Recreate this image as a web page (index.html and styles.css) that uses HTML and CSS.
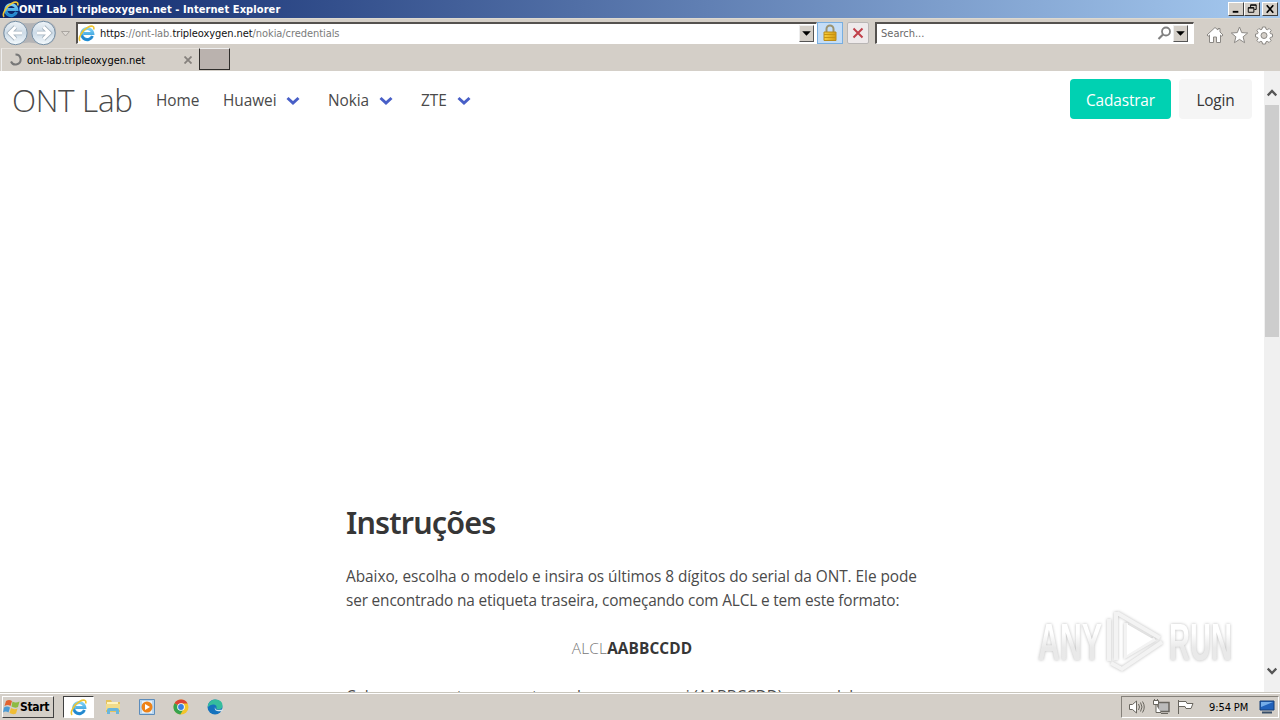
FILE: index.html
```html
<!DOCTYPE html>
<html lang="pt">
<head>
<meta charset="utf-8">
<title>ONT Lab | tripleoxygen.net</title>
<link rel="stylesheet" href="styles.css">
</head>
<body>
<svg width="0" height="0" class="defs">
  <defs>
    <linearGradient id="blue" x1="0" y1="0" x2="0" y2="1"><stop offset="0" stop-color="#7ed0f5"/><stop offset="1" stop-color="#1f8fd6"/></linearGradient>
    <linearGradient id="gold" x1="0" y1="0" x2="1" y2="0"><stop offset="0" stop-color="#f8cf3e"/><stop offset="1" stop-color="#d49a10"/></linearGradient>
    <linearGradient id="orb" x1="0" y1="0" x2="0" y2="1"><stop offset="0" stop-color="#eef3f7"/><stop offset=".5" stop-color="#cddbe7"/><stop offset="1" stop-color="#f4fafd"/></linearGradient>
    <linearGradient id="wmfill" x1="0" y1="0" x2="0" y2="1"><stop offset=".35" stop-color="#fff"/><stop offset=".6" stop-color="#e9e9e9"/></linearGradient>
    <symbol id="ie" viewBox="0 0 16 16">
      <path d="M13.6 10.4a5.2 5.2 0 1 1 .3-2.4H5.2" fill="none" stroke="url(#blue)" stroke-width="2.9"/>
      <path d="M13.6 10.4a5.2 5.2 0 0 1-9.8-.5" fill="none" stroke="#2584cb" stroke-width="1.4"/>
      <path d="M2 15C-.5 12.500 4 5 9 2.300c4-2.200 6.800-1.500 5.700 2" fill="none" stroke="#efc532" stroke-width="1.500"/>
    </symbol>
    <symbol id="chev" viewBox="0 0 14 10"><path d="M1.500 2l5.500 5 5.500-5" fill="none" stroke="#485fc7" stroke-width="3"/></symbol>
  </defs>
</svg>
<div class="screen">
  <header class="titlebar">
    <svg class="title-icon" width="17" height="17"><use href="#ie"/></svg>
    <span class="title-text">ONT Lab | tripleoxygen.net - Internet Explorer</span>
    <div class="winbtns">
      <svg class="winbtn" width="15" height="12" viewBox="0 0 15 12"><path d="M4 9h6" stroke="#000" stroke-width="2"/></svg>
      <svg class="winbtn" width="15" height="12" viewBox="0 0 15 12"><path d="M6 4.500V1.500h6v5h-2M3.500 4.500h6v5h-6zM6 2h6M3.500 5h6" fill="none" stroke="#000"/></svg>
      <svg class="winbtn close" width="15" height="12" viewBox="0 0 15 12"><path d="M4 2l7 8M11 2l-7 8" stroke="#000" stroke-width="1.800"/></svg>
    </div>
  </header>
  <div class="navrow">
    <svg class="backfwd" width="76" height="30" viewBox="0 0 76 30">
      <path d="M15 2.500Q29 8 43 2.500Q57 4 56 15Q55 27 43 27Q29 22 15 27Q3 25 3 15Q3 4 15 2.500" fill="#b4b4b6"/>
      <circle cx="15.500" cy="15" r="11.700" fill="url(#orb)" stroke="#7891a6"/>
      <circle cx="43.500" cy="15" r="11.700" fill="url(#orb)" stroke="#7891a6"/>
      <path d="M22 15H10M15.500 9l-6 6 6 6" fill="none" stroke="#a5b3bf" stroke-width="4.600"/>
      <path d="M22 15H10M15.500 9l-6 6 6 6" fill="none" stroke="#fff" stroke-width="3"/>
      <path d="M37 15h12M43.500 9l6 6-6 6" fill="none" stroke="#a5b3bf" stroke-width="4.600"/>
      <path d="M37 15h12M43.500 9l6 6-6 6" fill="none" stroke="#fff" stroke-width="3"/>
      <path d="M61.500 13.500h8L65.500 18z" fill="#dedad5" stroke="#aaa6a1"/>
    </svg>
    <div class="address">
      <svg width="17" height="17"><use href="#ie"/></svg>
      <span class="url">https<i>://ont-lab.</i>tripleoxygen.net<i>/nokia/credentials</i></span>
      <svg class="drop" width="12" height="14" viewBox="0 0 12 14"><path d="M2 5h8L6 9z"/></svg>
    </div>
    <div class="lock"><svg width="16" height="18" viewBox="0 0 16 18"><path d="M4.500 9V5a3.500 3.500 0 0 1 7 0v4" fill="none" stroke="#9b9370" stroke-width="2"/><path d="M2 8h12v8.500H2z" fill="url(#gold)" stroke="#b98b1b"/><path d="M2 10.500h12M2 13.500h12" stroke="#c8940f"/></svg></div>
    <div class="stop"><svg width="12" height="12" viewBox="0 0 12 12"><path d="M1.500 1.500l9 9M10.500 1.500l-9 9" stroke="#c0404a" stroke-width="2"/></svg></div>
    <div class="search">
      <span>Search...</span>
      <svg class="glass" width="15" height="15" viewBox="0 0 15 15"><circle cx="9" cy="5.500" r="4" fill="#fff" stroke="#808080" stroke-width="1.800"/><path d="M6 8.500L1.500 13" stroke="#808080" stroke-width="2.200"/></svg>
      <svg class="drop" width="12" height="14" viewBox="0 0 12 14"><path d="M2 5h8L6 9z"/></svg>
    </div>
    <svg class="tools" width="72" height="20" viewBox="0 0 72 20" fill="#fff" stroke="#8b8884">
      <path d="M2 10L10 2.500 13 5V3.500h2V7l3 3-1.200 1.300-1.300-1.200V17.500h-4V12h-3v5.500h-4V10l-1.300 1.300z"/>
      <path d="M34.500 2l2.200 5.600 6 .4-4.600 3.800 1.500 5.900-5.100-3.300-5.100 3.300 1.500-5.900L26.300 8l6-.4z"/>
      <g transform="translate(59 9.500)"><path d="M-1.500-7.500h3l.5 2.200 1.300.5 1.900-1.200 2 2-1.200 1.900.5 1.300 2 .4v2.800l-2.100.5-.5 1.200 1.200 1.900-2 2-1.900-1.200-1.200.5-.5 2.200h-3l-.5-2.200-1.200-.5-1.900 1.200-2-2 1.200-1.900-.5-1.200-2.100-.5V-.4l2.100-.4.5-1.300-1.200-1.900 2-2 1.900 1.200 1.200-.5z"/><circle r="3" cy="1" fill="#d4cfc8"/></g>
    </svg>
  </div>
  <div class="tabs">
    <div class="tab">
      <svg width="13" height="13" viewBox="0 0 13 13"><path d="M6.500 1.500a5 5 0 1 1-4.500 7" fill="none" stroke="#777" stroke-width="2"/></svg>
      <span>ont-lab.tripleoxygen.net</span>
      <svg class="tabx" width="8" height="8" viewBox="0 0 8 8"><path d="M.5.500l7 7M7.500.500l-7 7" stroke="#85817d" stroke-width="1.800"/></svg>
    </div>
    <div class="newtab"></div>
  </div>
  <div class="view">
    <main class="page">
      <nav class="nav">
        <span class="brand">ONT Lab</span>
        <span class="link home">Home</span>
        <span class="link huawei">Huawei<svg width="14" height="10"><use href="#chev"/></svg></span>
        <span class="link nokia">Nokia<svg width="14" height="10"><use href="#chev"/></svg></span>
        <span class="link zte">ZTE<svg width="14" height="10"><use href="#chev"/></svg></span>
        <div class="actions"><span class="btn primary">Cadastrar</span><span class="btn light">Login</span></div>
      </nav>
      <article class="content">
        <h1>Instruções</h1>
        <p><span class="l1">Abaixo, escolha o modelo e insira os últimos 8 dígitos do serial da ONT. Ele pode</span><br><span class="l2">ser encontrado na etiqueta traseira, começando com ALCL e tem este formato:</span></p>
        <p class="serial"><span class="pre">ALCL</span><b>AABBCCDD</b></p>
        <p class="l3">Coloque somente os caracteres do que vem aqui (AABBCCDD) no modelo</p>
      </article>
    </main>
    <div class="scroll">
      <svg width="10" height="8" viewBox="0 0 10 8"><path d="M.700 6.500L5 2l4.300 4.500" fill="none" stroke="#555" stroke-width="2.300"/></svg>
      <div class="thumb"></div>
      <svg class="down" width="10" height="8" viewBox="0 0 10 8"><path d="M.700 1.500L5 6l4.300-4.500" fill="none" stroke="#555" stroke-width="2.300"/></svg>
    </div>
    <svg class="watermark" width="210" height="76" viewBox="0 0 210 76">
      <g class="wm"><text x="6" y="57" textLength="64" lengthAdjust="spacingAndGlyphs">ANY</text><text x="137" y="57" textLength="63" lengthAdjust="spacingAndGlyphs">RUN</text>
      <path class="wmline" d="M77 16v42M85 10l43 25M84 9v48M79 60l11 6 40-27M94 20v33l29-17"/><path d="M95 21l26 15-26 16z" fill="#fff"/></g>
    </svg>
  </div>
  <footer class="taskbar">
    <div class="start">
      <svg width="17" height="16" viewBox="0 0 17 16"><path d="M3 2q3-2 6 0L7.500 7Q5 5 1.500 7z" fill="#e2622f"/><path d="M9.500 2.500q3 2 7 0L15 8q-3 1.500-6.500-.5z" fill="#8dbb43"/><path d="M1 8.500q3-2 6 0L5.500 13.500q-3-2-5.500 0z" fill="#4b9ad4"/><path d="M8 9q3 2 6.500.5L13 14.500q-3 1.500-6.500-.5z" fill="#f0bd35"/></svg>
      <span>Start</span>
    </div>
    <div class="task active"><svg width="17" height="17"><use href="#ie"/></svg></div>
    <svg class="task-icon explorer" width="16" height="16" viewBox="0 0 16 16"><path d="M1 1h5l1 2h8v10H1z" fill="#e5c35c"/><path d="M2 3h11v5H2z" fill="#fff4be"/><path d="M1 5h14v6H1z" fill="#f2dc8a"/><path d="M2 15v-4q0-2 2-2h8q2 0 2 2v4h-3v-3H5v3z" fill="#69b6dc"/></svg>
    <svg class="task-icon" width="16" height="16" viewBox="0 0 16 16"><path d="M.5.500h15v15H.5z" fill="#b9d6ef" stroke="#5c8cbb"/><path d="M3 2h10v12H3z" fill="#e7f1f9"/><circle cx="8" cy="8" r="5.500" fill="#ee8318"/><path d="M6 5l5 3-5 3z" fill="#fff"/></svg>
    <svg class="task-icon" width="16" height="16" viewBox="0 0 16 16"><circle cx="8" cy="8" r="7.500" fill="#f3c52b"/><path d="M8 8L1.500 4.200A7.500 7.500 0 0 1 14.600 4.500H8z" fill="#dc4335"/><path d="M8 8L1.500 4.200A7.500 7.500 0 0 0 7.300 15.500L10.600 10z" fill="#36a34e"/><circle cx="8" cy="8" r="3.800" fill="#fff"/><circle cx="8" cy="8" r="2.900" fill="#397fe0"/></svg>
    <svg class="task-icon" width="17" height="16" viewBox="0 0 17 16"><circle cx="8" cy="8" r="7.500" fill="#1572bd"/><path d="M1 6Q3 .5 8.500.500q7 .5 7 6Q15.500 10.500 11 10.500q-2 0-1.500-1.500Q10 6 7 5.500 3 5 1 8z" fill="#35bd9d"/><path d="M8 8q-1 3 2 4 3 .8 5.500-.2L16 10q-1 1-5 1-3 0-3-3z" fill="#d4e6ee"/></svg>
    <div class="tray">
      <svg width="66" height="18" viewBox="0 0 66 18" fill="#fff" stroke="#69665f">
        <path d="M1.500 6.500h3L8.500 3v12l-4-3.500h-3z"/><path d="M10.500 6q2 3 0 6M12.500 4.500q3 4.500 0 9M14.500 3.500q3.500 5.500 0 11" fill="none"/>
        <path d="M30 4.500h11v9H30z" fill="#bbb" stroke-width="1.500"/><path d="M33 15.500h7M25.500 2.500h5v4h-5zM28 7v7.500H33M26.500 1v2M29.500 1v2"/>
        <path d="M50.500 2v14M51 3.500h7l1 2h6l-2 5h-5l-1-2h-6"/>
      </svg>
      <span class="clock">9:54 PM</span>
      <svg width="16" height="14" viewBox="0 0 16 14"><path d="M1 1h14v9H1z" fill="#2162bb" stroke="#173f76"/><path d="M2 2h12L2 7z" fill="#75ade8"/><path d="M3 12.500h10" stroke="#384e68" stroke-width="2"/></svg>
    </div>
  </footer>
</div>
</body>
</html>
```
FILE: styles.css
```css
* { box-sizing: border-box; }
body { margin: 0; overflow: hidden; font-family: "DejaVu Sans Condensed", "DejaVu Sans", sans-serif; font-size: 11px; }
svg { display: block; flex: none; }
.defs { position: absolute; }
.screen { width: 1280px; height: 720px; display: flex; flex-direction: column; background: #d4cfc8; white-space: nowrap; }
.titlebar { height: 18px; flex: none; display: flex; align-items: center; padding: 0 2px; color: #fff; background: linear-gradient(90deg, #0b2469, #a6caf0); }
.title-text { font-weight: bold; letter-spacing: 0.09px; }
.winbtns { display: flex; margin-left: auto; }
.winbtn { background: #d4cfc8; border: 1px solid; border-color: #fff #404040 #404040 #fff; width: 16px; height: 14px; }
.close { margin-left: 2px; }
.navrow { height: 30px; flex: none; display: flex; align-items: center; border-top: 1px solid #ddd9d0; }
.backfwd, .address, .search, .lock, .stop { margin-top: -2px; }
.address, .search { height: 22px; display: flex; align-items: center; background: #fff; border: 1px solid #fff; border-top: 2px solid #55524f; border-left: 2px solid #55524f; }
.address { width: 741px; }
.url { margin-left: 5px; width: 241px; letter-spacing: -0.07px; color: #111; }
.url i { font-style: normal; color: #7b7b7b; }
.drop { margin-left: auto; width: 15px; height: 17px; background: #d4cfc8; border: 1px solid; border-color: #eee #555 #555 #eee; }
.address .drop { margin-right: 2px; }
.lock { width: 26px; height: 22px; display: flex; justify-content: center; align-items: center; background: #c4ddf7; border: 1px solid #78aee0; }
.stop { width: 22px; height: 22px; margin-left: 4px; margin-right: 6px; display: flex; justify-content: center; align-items: center; background: #eeeaeb; border: 1px solid #b9b6b5; border-radius: 2px; }
.search { width: 319px; padding: 0 5px 0 4px; color: #696969; }
.glass { margin-left: auto; }
.search .drop { margin-left: 1px; }
.tools { margin-left: 11px; margin-top: 2px; }
.tabs { height: 23px; flex: none; display: flex; }
.tab { width: 198px; display: flex; align-items: center; padding-left: 7px; margin-left: 1px; border-top: 1px solid #e5e1dc; border-left: 1px solid #eee; }
.tab span { margin-left: 5px; letter-spacing: -0.05px; }
.tab svg { margin-top: -1px; }
.tab .tabx { margin: 0 7px 0 auto; }
.newtab { width: 31px; height: 22px; background: #bab2ae; border: 1px solid #2f2d2b; border-top-color: #eee; }
.view { flex: 1; min-height: 0; display: flex; position: relative; background: #fff; }
.page { flex: 1; overflow: hidden; font-family: "Open Sans", "Noto Sans", sans-serif; font-size: 15.4px; color: #4a4a4a; }
.nav { height: 56px; display: flex; align-items: center; padding: 0 12px; }
.brand { width: 144px; font-size: 31.5px; font-weight: 300; letter-spacing: -0.35px; }
.link { display: flex; align-items: center; letter-spacing: -0.05px; padding-top: 3px; }
.link svg { margin-left: auto; }
.home { width: 67px; }
.huawei { width: 77px; margin-right: 28px; }
.nokia { width: 65px; margin-right: 28px; }
.zte { width: 50px; }
.actions { display: flex; margin-left: auto; gap: 8px; }
.btn { height: 40px; border-radius: 4px; line-height: 43px; text-align: center; letter-spacing: -0.15px; }
.primary { width: 101px; background: #00d1b2; color: #fff; }
.light { width: 73px; background: #f5f5f5; color: #363636; }
.content { width: 572px; margin: 377px 0 0 346px; }
h1 { margin: 0 0 25px; font-family: "Noto Sans", sans-serif; font-size: 30.5px; line-height: 36px; font-weight: 600; color: #363636; letter-spacing: -0.85px; }
p { margin: 0 0 24px; line-height: 24px; }
.l1 { letter-spacing: -0.05px; }
.l2 { letter-spacing: -0.16px; }
.l3 { letter-spacing: -0.14px; }
.serial { text-align: center; letter-spacing: 0.2px; }
.pre { font-weight: 300; color: #777; }
b { color: #363636; letter-spacing: 0.1px; }
.scroll { width: 16px; background: #f0f0f0; display: flex; flex-direction: column; align-items: center; padding-top: 18px; }
.thumb { width: 14px; height: 232px; margin-top: 8px; background: #cdcdcd; }
.down { margin: auto 0 17px; }
.watermark { position: absolute; left: 1032px; top: 532px; }
.wm { filter: drop-shadow(0 0 1.5px #bbb); }
.wm text { font: bold 52px "Liberation Sans", sans-serif; fill: url(#wmfill); }
.wmline { fill: none; stroke: #f3f3f3; stroke-width: 4; }
.taskbar { height: 28px; flex: none; display: flex; align-items: center; padding: 1px 1px 0 2px; border-top: 1px solid #c9c6bd; box-shadow: inset 0 1px #fff; }
.start { width: 52px; height: 22px; display: flex; align-items: center; font-size: 12px; font-weight: bold; border: 1px solid; border-color: #fff #404040 #404040 #fff; }
.start span { letter-spacing: -0.35px; }
.task { width: 31px; height: 22px; display: flex; justify-content: center; align-items: center; margin: 0 11px 0 9px; background: #fff; border: 1px solid; border-color: #404040 #fff #fff #404040; }
.task-icon { margin-right: 18px; }
.tray { margin-left: auto; width: 158px; height: 22px; display: flex; align-items: center; padding-left: 6px; border: 1px solid; border-color: #85817a #fff #fff #85817a; }
.clock { width: 50px; margin-left: 15px; letter-spacing: -0.1px; }
```
